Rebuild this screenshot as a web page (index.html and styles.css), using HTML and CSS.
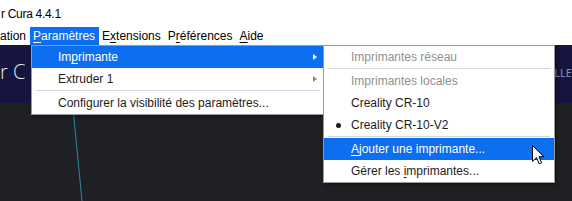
FILE: index.html
```html
<!DOCTYPE html>
<html lang="fr">
<head>
<meta charset="utf-8">
<title>Cura</title>
<link rel="stylesheet" href="styles.css">
</head>
<body>
<div class="window">
  <div class="titlebar"><span class="title">r Cura 4.4.1</span></div>
  <div class="menubar">
    <span class="mi first">ation</span>
    <span class="mi active"><u>P</u>aramètres</span>
    <span class="mi">E<u>x</u>tensions</span>
    <span class="mi">P<u>r</u>éférences</span>
    <span class="mi"><u>A</u>ide</span>
  </div>
  <div class="stage">
    <div class="header">
      <span class="logo">r C</span>
      <span class="tab">LLE</span>
    </div>
    <div class="viewport">
      <svg class="grid" width="572" height="98" viewBox="0 0 572 98">
        <line x1="72.5" y1="0" x2="82" y2="98" stroke="#2f86ad" stroke-width="1"/>
      </svg>
    </div>
  </div>

  <div class="menu menu-params">
    <div class="item hl"><span>Im<u>p</u>rimante</span><span class="arrow"></span></div>
    <div class="item"><span>Extruder 1</span><span class="arrow"></span></div>
    <div class="sep"></div>
    <div class="item"><span>Configurer la visibilité des paramètres...</span></div>
  </div>

  <div class="menu menu-printers">
    <div class="item dis"><span class="mark"></span><span>Imprimantes réseau</span></div>
    <div class="sep"></div>
    <div class="item dis"><span class="mark"></span><span>Imprimantes locales</span></div>
    <div class="item"><span class="mark"></span><span>Creality CR-10</span></div>
    <div class="item"><span class="mark"><i class="dot"></i></span><span>Creality CR-10-V2</span></div>
    <div class="sep"></div>
    <div class="item hl"><span class="mark"></span><span><u>A</u>jouter une imprimante...</span></div>
    <div class="item"><span class="mark"></span><span>Gérer les <u>i</u>mprimantes...</span></div>
  </div>

  <svg class="cursor" width="13" height="20" viewBox="0 0 13 20">
    <path d="M0.5 0.5 L0.5 16.5 L4.5 12.6 L7.2 18.8 L9.6 17.8 L7 11.7 L12 11.7 Z" fill="#fff" stroke="#000" stroke-width="1" stroke-linejoin="miter"/>
  </svg>
</div>
</body>
</html>
```

FILE: styles.css
```css
* { box-sizing: border-box; }
html, body { margin: 0; padding: 0; }
body {
  width: 572px;
  height: 201px;
  overflow: hidden;
  background: #1f2023;
  font-family: "Liberation Sans", Arial, sans-serif;
}
.window {
  position: relative;
  width: 572px;
  height: 201px;
  overflow: hidden;
}
.titlebar {
  height: 27px;
  background: #fff;
  padding: 4px 0 0 1px;
}
.title {
  font-size: 12px;
  letter-spacing: -0.3px;
  color: #000;
}
.menubar {
  height: 18px;
  background: #fff;
  display: flex;
  font-size: 12px;
  color: #000;
}
.mi {
  line-height: 18px;
  padding: 0 3.5px;
  height: 18px;
}
.mi.first { padding-left: 0; }
.mi.active {
  background: #0b6ff0;
  color: #fff;
}
.mi u, .item u { text-underline-offset: 2px; }

.stage { height: 156px; display: flex; flex-direction: column; }
.header {
  height: 58px;
  background: #15153f;
  display: flex;
  align-items: center;
  justify-content: space-between;
}
.logo {
  font-family: "Open Sans", "Noto Sans", sans-serif;
  font-weight: 300;
  font-size: 20px;
  color: #e6e6ee;
  margin-top: -5px;
}
.tab {
  font-family: "Noto Sans", sans-serif;
  font-size: 11px;
  color: #8d8db5;
  margin-top: -4px;
  margin-right: 0;
}
.viewport {
  flex: 1;
  background: #1f2023;
}
.grid { display: block; }

.menu {
  position: absolute;
  top: 45px;
  background: #fff;
  border: 1px solid #9a9a9a;
  box-shadow: 2px 2px 3px rgba(0,0,0,0.35);
  font-size: 12px;
  color: #1c1c1c;
}
.menu-params { left: 31px; width: 294px; }
.menu-printers { left: 323px; width: 232px; }

.item {
  height: 22px;
  line-height: 22px;
  display: flex;
  align-items: center;
  white-space: nowrap;
}
.menu-params .item { padding: 0 7px 0 26px; }
.menu-printers .item { padding: 0 6px 0 0; }
.item.hl { background: #0b6ff0; color: #fff; }
.item.dis { color: #8f8f8f; }

.arrow {
  margin-left: auto;
  width: 0;
  height: 0;
  border-top: 3.5px solid transparent;
  border-bottom: 3.5px solid transparent;
  border-left: 4px solid #8a8a8a;
}
.item.hl .arrow { border-left-color: #fff; }

.sep {
  height: 1px;
  background: #d4d4d4;
  margin: 0 4px 1px 4px;
}
.mark {
  width: 27px;
  padding-left: 1px;
  display: flex;
  justify-content: center;
  align-items: center;
  height: 22px;
}
.dot {
  width: 5px;
  height: 5px;
  border-radius: 50%;
  background: #1c1c1c;
}
.cursor {
  position: absolute;
  left: 532px;
  top: 145px;
}
```
